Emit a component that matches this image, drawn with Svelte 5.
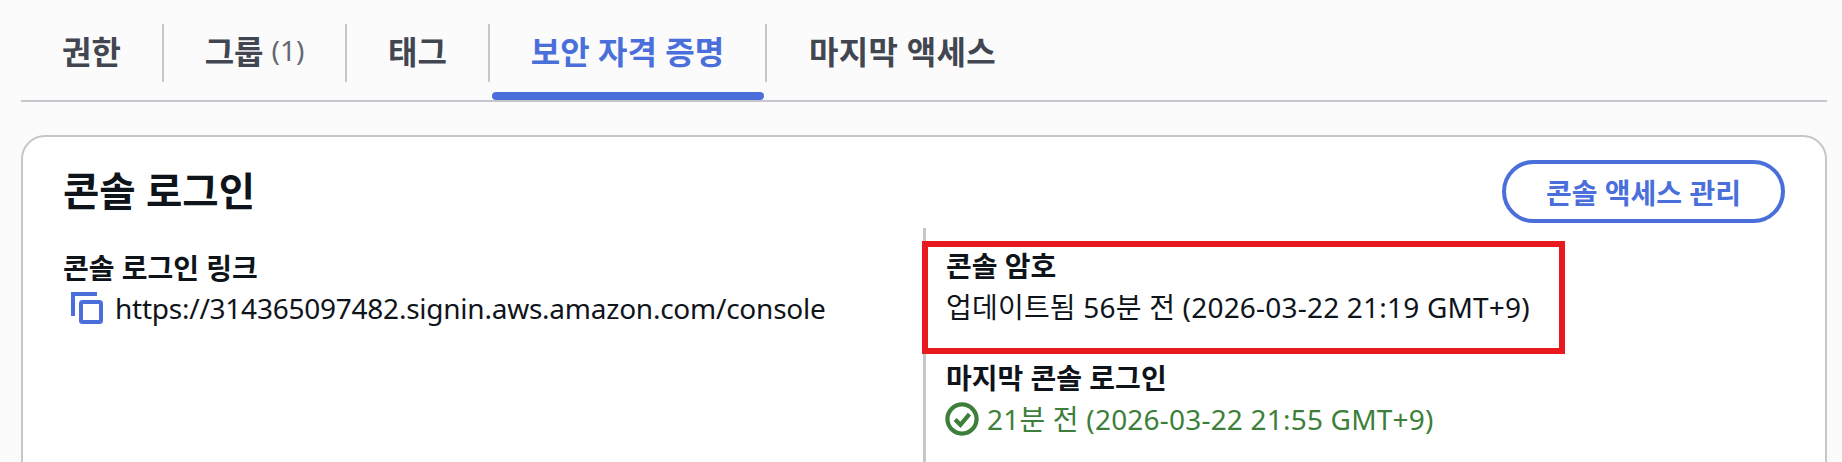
<script lang="ts">
  const tabs = [
    { label: '권한' },
    { label: '그룹', count: '(1)' },
    { label: '태그' },
    { label: '보안 자격 증명', active: true },
    { label: '마지막 액세스' }
  ];
</script>

<div class="page">
  <div class="tabs">
    {#each tabs as tab}
      <div class="tab" class:active={tab.active}>
        <span class="tab-label">{tab.label}</span>
        {#if tab.count}<span class="tab-count">{tab.count}</span>{/if}
      </div>
    {/each}
  </div>

  <section class="card">
    <header class="card-head">
      <h2>콘솔 로그인</h2>
      <button type="button">콘솔 액세스 관리</button>
    </header>

    <div class="columns">
      <div class="col-left">
        <div class="label">콘솔 로그인 링크</div>
        <div class="link-row">
          <svg class="copy" width="32" height="32" viewBox="0 0 32 32" aria-hidden="true">
            <path d="M2 24V2H26" fill="none" stroke="#4a6fdb" stroke-width="4" />
            <rect x="10" y="10" width="20" height="20" rx="1.5" fill="none" stroke="#4a6fdb" stroke-width="4" />
          </svg>
          <span>https://314365097482.signin.aws.amazon.com/console</span>
        </div>
      </div>

      <div class="col-right">
        <div class="item password">
          <div class="label">콘솔 암호</div>
          <div class="value">업데이트됨 56분 전 (2026-03-22 21:19 GMT+9)</div>
          <div class="highlight"></div>
        </div>
        <div class="item">
          <div class="label">마지막 콘솔 로그인</div>
          <div class="value ok">
            <svg width="34" height="34" viewBox="0 0 32 32" aria-hidden="true">
              <circle cx="16" cy="16" r="13.7" fill="none" stroke="#3d7f3a" stroke-width="4" />
              <path d="M9.5 16.5l5 5 8.5-10" fill="none" stroke="#3d7f3a" stroke-width="4" />
            </svg>
            <span>21분 전 (2026-03-22 21:55 GMT+9)</span>
          </div>
        </div>
      </div>
    </div>
  </section>
</div>

<style>
  :global(body) {
    margin: 0;
    background: #fbfbfc;
  }

  .page {
    height: 462px;
    overflow: hidden;
    padding: 0 15px 0 21px;
    box-sizing: border-box;
    font-family: "Noto Sans", "Noto Sans CJK KR", sans-serif;
    color: #0f141a;
  }

  .tabs {
    display: flex;
    padding-top: 24px;
    height: 76px;
    border-bottom: 2px solid #c6c6cd;
  }

  .tab {
    position: relative;
    display: flex;
    align-items: center;
    justify-content: center;
    gap: 8px;
    height: 58px;
    padding-bottom: 6px;
    box-sizing: border-box;
    border-right: 2px solid #c6c6cd;
    font-size: 32px;
    font-weight: 700;
    color: #424650;
  }

  .tab:nth-child(1) { width: 143px; }
  .tab:nth-child(2) { width: 183px; }
  .tab:nth-child(3) { width: 143px; }
  .tab:nth-child(4) { width: 277px; color: #4a6fdb; }
  .tab:nth-child(5) { width: 230px; border-right: 0; padding-left: 42px; white-space: nowrap; justify-content: flex-start; letter-spacing: 0.3px; }

  .tab.active::after {
    content: "";
    position: absolute;
    left: 2px;
    right: 1px;
    top: 68px;
    height: 8px;
    border-radius: 4px;
    background: #4a6fdb;
  }

  .tab-count {
    font-size: 28px;
    font-weight: 400;
    color: #656871;
  }

  .card {
    margin-top: 33px;
    height: 400px;
    box-sizing: border-box;
    background: #fff;
    border: 2px solid #c6c6cd;
    border-radius: 24px;
    padding: 23px 40px 0 40px;
  }

  .card-head {
    display: flex;
    justify-content: space-between;
    align-items: flex-start;
    height: 68px;
  }

  h2 {
    margin: 0;
    font-size: 39.5px;
    line-height: 62px;
    font-weight: 700;
  }

  button {
    width: 283px;
    height: 63px;
    border: 4px solid #4a6fdb;
    border-radius: 32px;
    background: #fff;
    color: #4a6fdb;
    font: 700 28px "Noto Sans", "Noto Sans CJK KR", sans-serif;
  }

  .columns {
    display: grid;
    grid-template-columns: 860px 1fr;
  }

  .col-left {
    padding-top: 20px;
  }

  .col-right {
    border-left: 3px solid #c6c6cd;
    padding-left: 20px;
    padding-top: 18px;
    height: 260px;
  }

  .label {
    font-size: 28px;
    line-height: 40px;
    font-weight: 700;
  }

  .link-row {
    display: flex;
    align-items: center;
    gap: 12px;
    padding-left: 8px;
    font-size: 28px;
    line-height: 40px;
    letter-spacing: -0.24px;
  }

  .value {
    font-size: 28px;
    line-height: 40px;
    padding-top: 1px;
    letter-spacing: 0.2px;
  }

  .item {
    position: relative;
  }

  .password {
    height: 112px;
  }

  .highlight {
    position: absolute;
    left: -24px;
    top: -5px;
    width: 643px;
    height: 113px;
    box-sizing: border-box;
    border: 6px solid #e8191f;
  }

  .ok {
    display: flex;
    align-items: center;
    gap: 8px;
    margin-left: -1px;
    color: #3d7f3a;
  }
</style>
